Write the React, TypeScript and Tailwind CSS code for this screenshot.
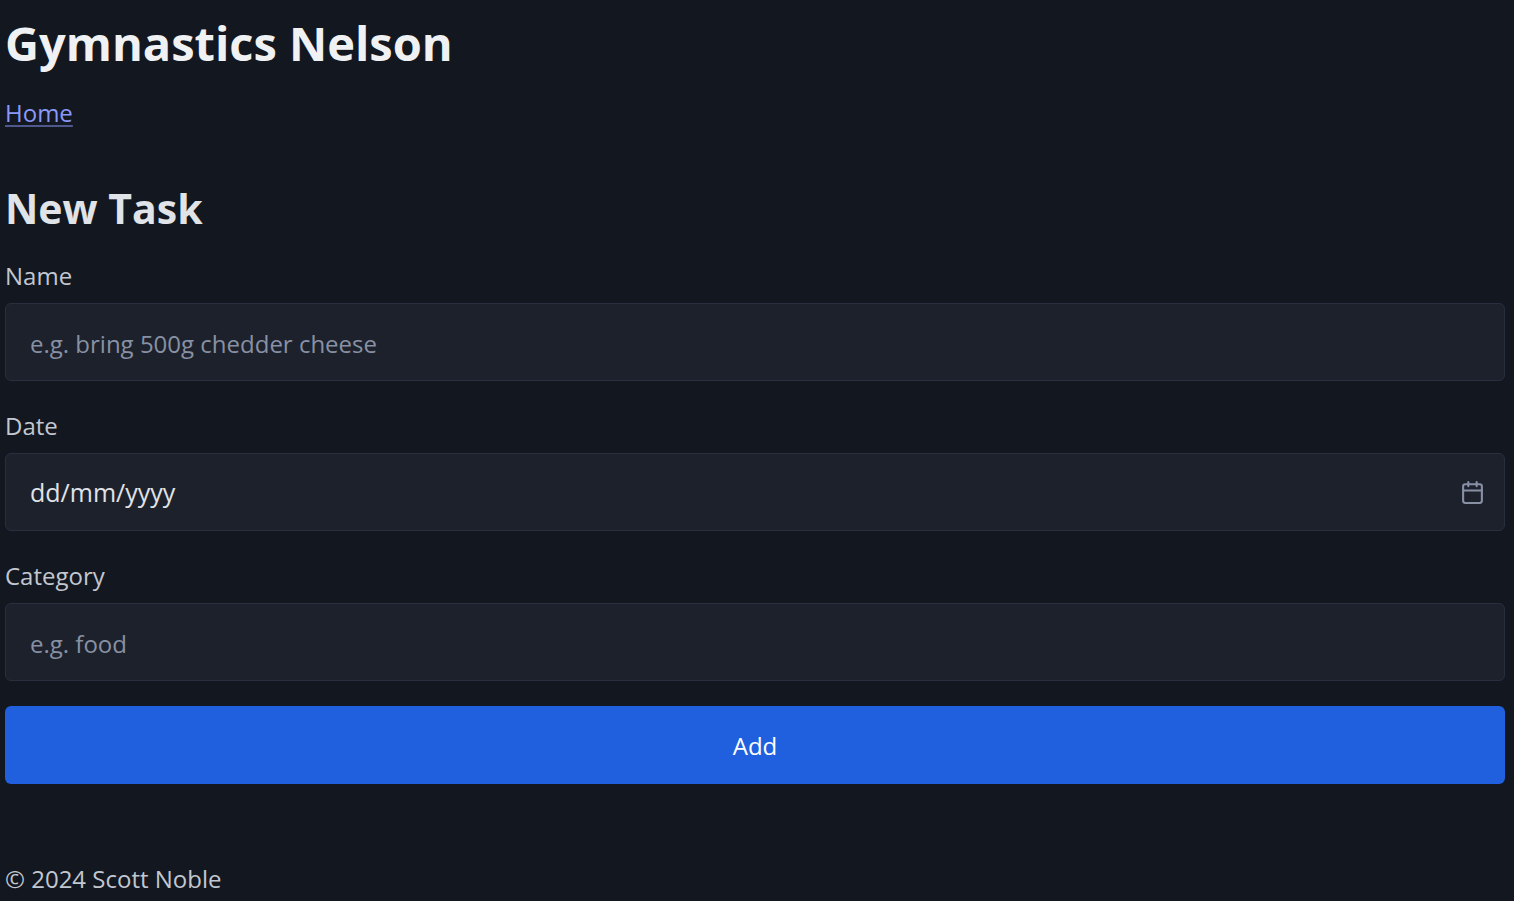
import { useState, type InputHTMLAttributes } from "react";

type FieldProps = InputHTMLAttributes<HTMLInputElement> & { id: string; label: string };

function Field({ id, label, className = "", ...rest }: FieldProps) {
  return (
    <div className="mb-[25px]">
      <label htmlFor={id} className="block pb-2 text-2xl leading-[39px]">
        {label}
      </label>
      <input
        id={id}
        name={id}
        className={`block h-[78px] w-full rounded-[6px] border border-[#2a2f40] bg-[#1d212c] px-6 text-[#e0e3e7] outline-none placeholder:opacity-100 focus:border-[#8999f9] ${className}`}
        {...rest}
      />
    </div>
  );
}

function CalendarIcon() {
  return (
    <svg
      className="pointer-events-none absolute right-5 bottom-[26px] size-[25px]"
      viewBox="0 0 24 24"
      fill="none"
      stroke="#8891a4"
      strokeWidth="2"
      strokeLinecap="round"
      strokeLinejoin="round"
      aria-hidden="true"
    >
      <rect x="3" y="4" width="18" height="18" rx="2" ry="2" />
      <line x1="16" y1="2" x2="16" y2="6" />
      <line x1="8" y1="2" x2="8" y2="6" />
      <line x1="3" y1="10" x2="21" y2="10" />
    </svg>
  );
}

export default function App() {
  const [date, setDate] = useState("");
  return (
    <div className="min-h-screen bg-[#13171f] pr-[9px] pl-[5px] font-['Open_Sans',sans-serif] text-[#c2c7d0]">
      <header className="pt-3">
        <h1 className="text-[47px] leading-[62px] font-bold text-[#f0f1f3]">Gymnastics Nelson</h1>
        <nav className="pt-5 text-2xl leading-[38px]">
          <a href="#home" className="text-[#8999f9] underline decoration-[#8999f9]/50 decoration-2 underline-offset-3">
            Home
          </a>
        </nav>
      </header>
      <main className="pt-12">
        <h2 className="text-[41px] leading-[56px] font-bold text-[#e0e3e7]">New Task</h2>
        <form className="pt-5" onSubmit={(event) => event.preventDefault()}>
          <Field id="name" label="Name" placeholder="e.g. bring 500g chedder cheese" className="pt-0.5 text-2xl placeholder:text-[#8891a4]" />
          <div className="relative">
            <Field
              id="date"
              label="Date"
              placeholder="dd/mm/yyyy"
              className="text-[25px] placeholder:text-[#e0e3e7]"
              value={date}
              onChange={(event) => setDate(event.target.value)}
            />
            <CalendarIcon />
          </div>
          <Field id="category" label="Category" placeholder="e.g. food" className="pt-0.5 text-2xl placeholder:text-[#8891a4]" />
          <button type="submit" className="block h-[78px] w-full rounded-[6px] bg-[#2060df] pt-0.5 text-2xl text-white">
            Add
          </button>
        </form>
      </main>
      <footer className="pt-[76px] text-2xl leading-[38px]">© 2024 Scott Noble</footer>
    </div>
  );
}
